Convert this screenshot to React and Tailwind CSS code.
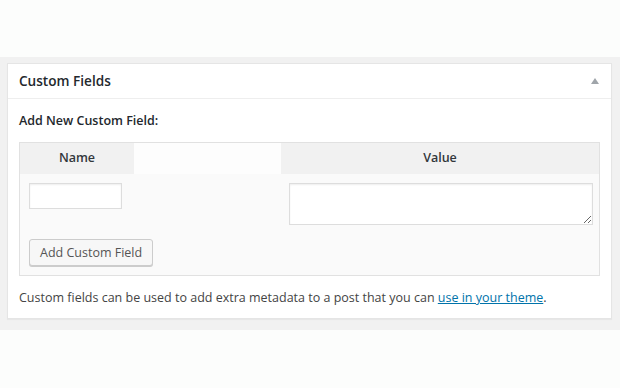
export default function App() {
  return (
    <div className="min-h-[388px] bg-[#fcfdfc] pt-[57px] font-['Open_Sans',sans-serif] text-[#444]">
      <div className="bg-[#f1f1f1] pl-[7px] pr-[8px] pt-[6px] pb-[11px]">
        {/* Custom Fields box */}
        <div className="border border-[#e5e5e5] bg-white shadow-[0_1px_1px_rgba(0,0,0,0.04)]">
          <div className="flex h-[35px] items-center justify-between border-b border-[#eee] pl-[11px] pr-[12px]">
            <h2 className="text-[13.6px] font-semibold text-[#23282d]">Custom Fields</h2>
            <span className="h-0 w-0 border-x-[4px] border-b-[6px] border-x-transparent border-b-[#a0a5aa]"></span>
          </div>

          <div className="px-[11px] pb-[11px] pt-[13px]">
            <p className="text-[12.5px] font-semibold leading-[18px] text-[#23282d]">Add New Custom Field:</p>

            <div className="mt-[12px] grid grid-cols-[114px_147px_1fr] border border-[#e1e1e1] bg-[#fafafa]">
              <div className="flex h-[31px] items-center justify-center bg-[#f1f1f1] text-[12.5px] font-semibold text-[#32373c]">
                Name
              </div>
              <div className="bg-[#fdfdfd]"></div>
              <div className="flex h-[31px] items-center justify-center bg-[#f1f1f1] text-[12.5px] font-semibold text-[#32373c]">
                Value
              </div>

              <div className="pl-[9px] pt-[9px]">
                <input
                  type="text"
                  className="block h-[26px] w-[93px] border border-[#ddd] bg-white shadow-[inset_0_1px_2px_rgba(0,0,0,0.07)] outline-none"
                />
              </div>
              <div></div>
              <div className="pl-[8px] pr-[6px] pt-[9px]">
                <textarea
                  rows="2"
                  className="block h-[42px] w-full border border-[#ddd] bg-white shadow-[inset_0_1px_2px_rgba(0,0,0,0.07)] outline-none"
                ></textarea>
              </div>

              <div className="col-span-3 pl-[9px] pt-[14px] pb-[9px]">
                <button className="h-[27px] rounded-[3px] border border-[#ccc] bg-[#f7f7f7] px-[10px] text-[12.5px] leading-[25px] text-[#555] shadow-[0_1px_0_#ccc]">
                  Add Custom Field
                </button>
              </div>
            </div>

            <p className="mt-[13px] text-[12.5px] leading-[18px]">
              Custom fields can be used to add extra metadata to a post that you can{' '}
              <a href="#" className="text-[#0073aa] underline">
                use in your theme
              </a>
              .
            </p>
          </div>
        </div>
      </div>
    </div>
  );
}
